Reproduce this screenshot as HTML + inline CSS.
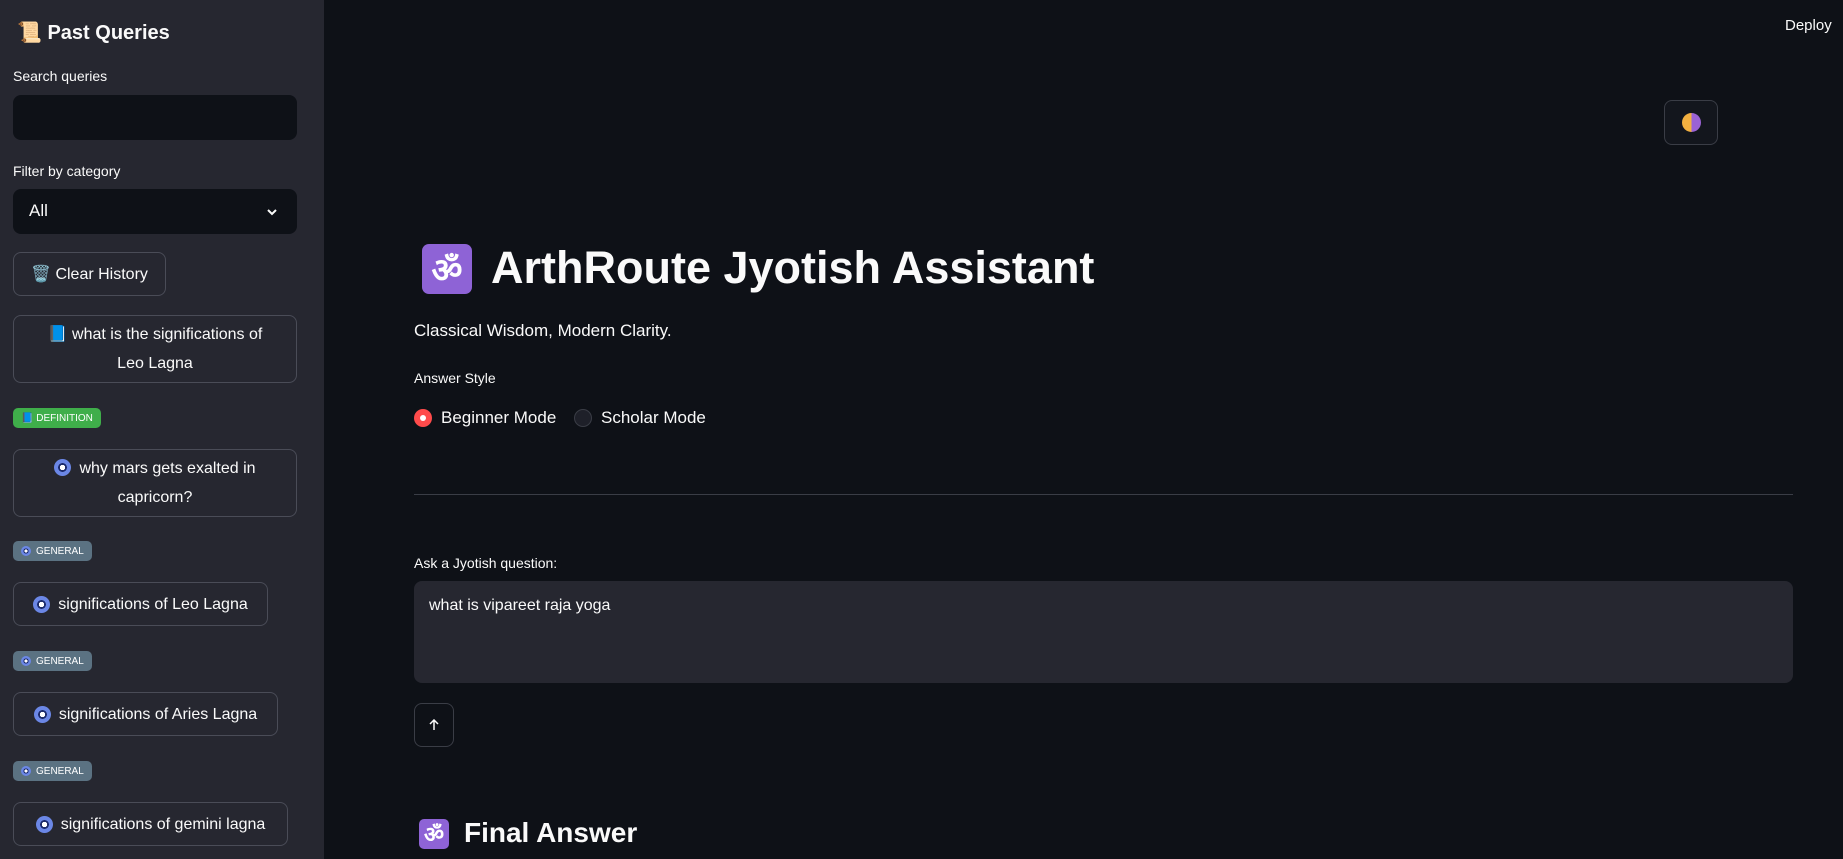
<!DOCTYPE html>
<html><head><meta charset="utf-8"><style>
*{box-sizing:border-box;margin:0;padding:0}
body{width:1843px;height:859px;overflow:hidden;background:#0e1117;font-family:"Liberation Sans",sans-serif;color:#fafafa;position:relative}
.sb{position:absolute;left:0;top:0;width:324px;height:859px;background:#262730}
.a{position:absolute}
.lbl{font-size:14px;color:#fafafa}
.inp{background:#0e1117;border-radius:8px;left:13px;width:284px;height:45px}
.btn{border:1px solid #4a4c57;border-radius:8px;background:#262730;font-size:16px;color:#fafafa;display:flex;align-items:center;justify-content:center;text-align:center;line-height:29px}
.eye{display:inline-block;width:17px;height:17px;border-radius:50%;background:radial-gradient(circle,#fff 0 22%,#1b2a6b 23% 36%,#6b87e6 37%);margin-right:8px;vertical-align:-3px}
.badge{font-size:10px;font-weight:normal;border-radius:5px;height:20px;display:flex;align-items:center;padding:0 8px;color:#fff}
.g{background:#5b7282}
.om{display:flex;align-items:center;justify-content:center;background:#8e63d6;color:#fff;border-radius:7px;font-weight:bold;overflow:hidden}
</style></head><body>
<div class="sb">
<div class="a" style="left:17px;top:20px;font-size:20px;font-weight:bold"><span style="color:#f0b060">📜</span> Past Queries</div>
<div class="a lbl" style="left:13px;top:68px">Search queries</div>
<div class="a inp" style="top:95px"></div>
<div class="a lbl" style="left:13px;top:163px">Filter by category</div>
<div class="a inp" style="top:189px"><span class="a" style="left:16px;top:12px;font-size:17px">All</span>
<svg class="a" style="left:252px;top:16px" width="14" height="14" viewBox="0 0 14 14"><path d="M3 5l4 4 4-4" stroke="#fafafa" stroke-width="2" fill="none"/></svg></div>
<div class="a btn" style="left:13px;top:252px;width:153px;height:44px">🗑️&nbsp;Clear History</div>
<div class="a btn" style="left:13px;top:315px;width:284px;height:68px;padding:0 26px"><span><span style="color:#3b8be0">📘</span> what is the significations of Leo Lagna</span></div>
<div class="a badge" style="left:13px;top:408px;background:#3fae4a">📘 DEFINITION</div>
<div class="a btn" style="left:13px;top:449px;width:284px;height:68px;padding:0 30px"><span><span class="eye"></span>why mars gets exalted in capricorn?</span></div>
<div class="a badge g" style="left:13px;top:541px"><span class="eye" style="width:10px;height:10px;margin-right:5px;vertical-align:0"></span>GENERAL</div>
<div class="a btn" style="left:13px;top:582px;width:255px;height:44px"><span class="eye"></span>significations of Leo Lagna</div>
<div class="a badge g" style="left:13px;top:651px"><span class="eye" style="width:10px;height:10px;margin-right:5px;vertical-align:0"></span>GENERAL</div>
<div class="a btn" style="left:13px;top:692px;width:265px;height:44px"><span class="eye"></span>significations of Aries Lagna</div>
<div class="a badge g" style="left:13px;top:761px"><span class="eye" style="width:10px;height:10px;margin-right:5px;vertical-align:0"></span>GENERAL</div>
<div class="a btn" style="left:13px;top:802px;width:275px;height:44px"><span class="eye"></span>significations of gemini lagna</div>
</div>
<div class="a" style="left:1785px;top:17px;font-size:15px">Deploy</div>
<div class="a" style="left:1664px;top:100px;width:54px;height:45px;border:1px solid #3a3d46;border-radius:8px;background:#13161d"><div class="a" style="left:17px;top:12px;width:19px;height:19px;border-radius:50%;background:linear-gradient(90deg,#f3b040 50%,#9a62d4 50%)"></div></div>
<div class="a om" style="left:422px;top:244px;width:50px;height:50px;font-size:34px">ॐ</div>
<div class="a" style="left:491px;top:242px;font-size:45px;font-weight:bold;white-space:nowrap">ArthRoute Jyotish Assistant</div>
<div class="a" style="left:414px;top:321px;font-size:17px">Classical Wisdom, Modern Clarity.</div>
<div class="a" style="left:414px;top:370px;font-size:14px">Answer Style</div>
<div class="a" style="left:414px;top:409px;width:18px;height:18px;border-radius:50%;background:#ff4b4b"><div class="a" style="left:6px;top:6px;width:6px;height:6px;border-radius:50%;background:#fff"></div></div>
<div class="a" style="left:441px;top:408px;font-size:17px">Beginner Mode</div>
<div class="a" style="left:574px;top:409px;width:18px;height:18px;border-radius:50%;background:#1e2029;border:1px solid #3a3d46"></div>
<div class="a" style="left:601px;top:408px;font-size:17px">Scholar Mode</div>
<div class="a" style="left:414px;top:494px;width:1379px;height:1px;background:#3a3d46"></div>
<div class="a" style="left:414px;top:555px;font-size:14px">Ask a Jyotish question:</div>
<div class="a" style="left:414px;top:581px;width:1379px;height:102px;background:#262730;border-radius:8px"><span class="a" style="left:15px;top:16px;font-size:16px">what is vipareet raja yoga</span></div>
<div class="a" style="left:414px;top:703px;width:40px;height:44px;border:1px solid #3a3d46;border-radius:8px"><svg class="a" style="left:13px;top:15px" width="12" height="12" viewBox="0 0 12 12"><path d="M6 11V1M2 5l4-4 4 4" stroke="#fafafa" stroke-width="1.5" fill="none"/></svg></div>
<div class="a om" style="left:419px;top:819px;width:30px;height:30px;font-size:22px;border-radius:5px">ॐ</div>
<div class="a" style="left:464px;top:817px;font-size:28px;font-weight:bold">Final Answer</div>
</body></html>
